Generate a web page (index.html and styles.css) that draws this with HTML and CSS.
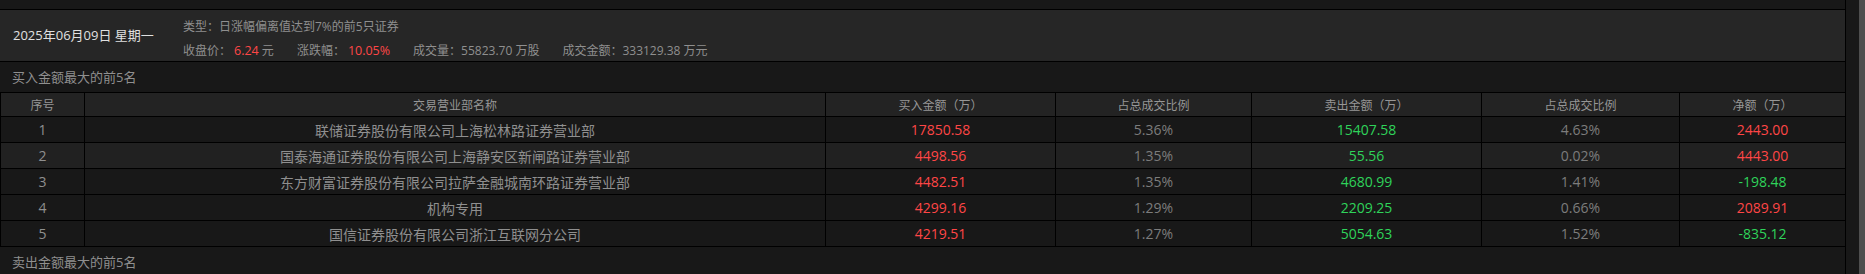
FILE: index.html
```html
<!DOCTYPE html>
<html lang="zh-CN">
<head>
<meta charset="utf-8">
<title>龙虎榜</title>
<link rel="stylesheet" href="styles.css">
</head>
<body>
<div class="page">
  <main class="main">
    <section class="summary">
      <div class="date">2025年06月09日 星期一</div>
      <div class="info">
        <div class="type">类型：日涨幅偏离值达到7%的前5只证券</div>
        <div class="stats">
          <span class="stat">收盘价：<b class="up">6.24</b> 元</span>
          <span class="stat">涨跌幅：<b class="up">10.05%</b></span>
          <span class="stat">成交量：55823.70 万股</span>
          <span class="stat">成交金额：333129.38 万元</span>
        </div>
      </div>
    </section>
    <div class="label">买入金额最大的前5名</div>
    <table class="grid">
      <colgroup>
        <col class="c-no"><col class="c-name"><col class="c-amt"><col class="c-pct"><col class="c-amt"><col class="c-pct2"><col class="c-net">
      </colgroup>
      <thead>
        <tr><th>序号</th><th>交易营业部名称</th><th>买入金额（万）</th><th>占总成交比例</th><th>卖出金额（万）</th><th>占总成交比例</th><th>净额（万）</th></tr>
      </thead>
      <tbody>
        <tr><td>1</td><td>联储证券股份有限公司上海松林路证券营业部</td><td class="up">17850.58</td><td class="pct">5.36%</td><td class="down">15407.58</td><td class="pct">4.63%</td><td class="up">2443.00</td></tr>
        <tr class="alt"><td>2</td><td>国泰海通证券股份有限公司上海静安区新闸路证券营业部</td><td class="up">4498.56</td><td class="pct">1.35%</td><td class="down">55.56</td><td class="pct">0.02%</td><td class="up">4443.00</td></tr>
        <tr><td>3</td><td>东方财富证券股份有限公司拉萨金融城南环路证券营业部</td><td class="up">4482.51</td><td class="pct">1.35%</td><td class="down">4680.99</td><td class="pct">1.41%</td><td class="down">-198.48</td></tr>
        <tr><td>4</td><td>机构专用</td><td class="up">4299.16</td><td class="pct">1.29%</td><td class="down">2209.25</td><td class="pct">0.66%</td><td class="up">2089.91</td></tr>
        <tr><td>5</td><td>国信证券股份有限公司浙江互联网分公司</td><td class="up">4219.51</td><td class="pct">1.27%</td><td class="down">5054.63</td><td class="pct">1.52%</td><td class="down">-835.12</td></tr>
      </tbody>
    </table>
    <div class="label">卖出金额最大的前5名</div>
  </main>
  <div class="scrollbar"></div>
</div>
</body>
</html>
```
FILE: styles.css
```css
* { box-sizing: border-box; }
html, body { margin: 0; padding: 0; background: #181818; }
body {
  font-family: "Open Sans", "Noto Sans CJK SC", sans-serif;
  color: #8f8f8f;
  overflow: hidden;
}
.page {
  display: flex;
  justify-content: space-between;
  height: 274px;
}
.main {
  width: 1846px;
  padding-top: 9px;
  border-right: 1px solid #000;
}
.summary {
  display: flex;
  align-items: stretch;
  height: 53px;
  background: #262626;
  border-top: 1px solid #000;
  border-bottom: 1px solid #000;
}
.date {
  width: 183px;
  padding-left: 13px;
  display: flex;
  align-items: center;
  font-size: 13px;
  color: #e0e0e0;
  padding-bottom: 2px;
}
.info {
  display: flex;
  flex-direction: column;
  font-size: 12px;
  padding-top: 8px;
  gap: 7px;
}
.type, .stats { line-height: 17px; height: 17px; }
.stats { display: flex; gap: 23px; }
.stat b { font-weight: normal; font-size: 12.5px; margin-left: 3px; }
.up { color: #ff4646; }
.down { color: #2fd35a; }
.label {
  height: 30px;
  line-height: 30px;
  padding-left: 12px;
  font-size: 13px;
  color: #8f8f8f;
}
.grid {
  width: 1845px;
  border-collapse: collapse;
  table-layout: fixed;
}
.c-no { width: 84px; }
.c-name { width: 741px; }
.c-amt { width: 230px; }
.c-pct { width: 196px; }
.c-pct2 { width: 198px; }
.c-net { width: 166px; }
.grid th, .grid td {
  border: 1px solid #000;
  text-align: center;
  padding: 0;
  white-space: nowrap;
}
.grid th {
  height: 24px;
  font-size: 12px;
  font-weight: normal;
  background: #232323;
  color: #969696;
}
.grid td {
  height: 26px;
  font-size: 14px;
  color: #8f8f8f;
}
.grid td.up { color: #ff4646; }
.grid td.down { color: #2fd35a; }
.grid td.pct { color: #7c7c7c; }
.grid tr.alt td { background: #212121; }
.scrollbar {
  width: 6px;
  background: #4e4e4e;
}
```
